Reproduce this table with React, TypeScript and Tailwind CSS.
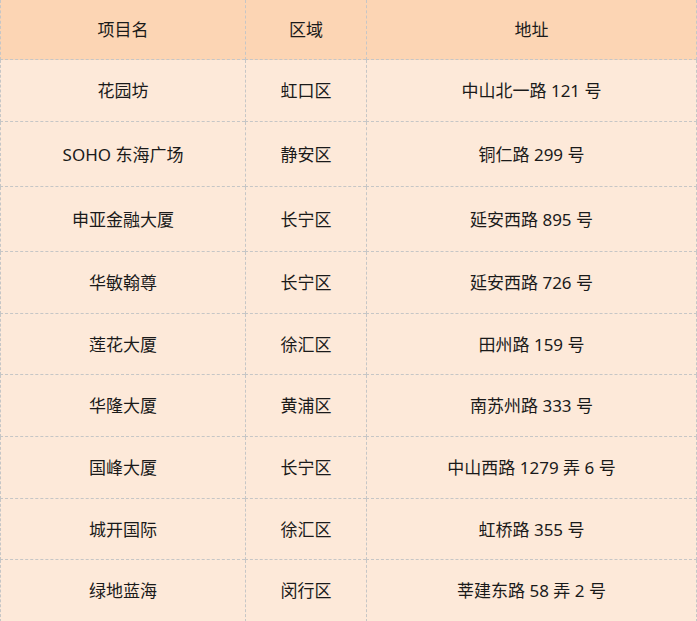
import React from "react";

const rows: { name: string; area: string; addr: string; h: string }[] = [
  { name: "花园坊", area: "虹口区", addr: "中山北一路 121 号", h: "h-[62px]" },
  { name: "SOHO 东海广场", area: "静安区", addr: "铜仁路 299 号", h: "h-[65px]" },
  { name: "申亚金融大厦", area: "长宁区", addr: "延安西路 895 号", h: "h-[65px]" },
  { name: "华敏翰尊", area: "长宁区", addr: "延安西路 726 号", h: "h-[62px]" },
  { name: "莲花大厦", area: "徐汇区", addr: "田州路 159 号", h: "h-[61px]" },
  { name: "华隆大厦", area: "黄浦区", addr: "南苏州路 333 号", h: "h-[62px]" },
  { name: "国峰大厦", area: "长宁区", addr: "中山西路 1279 弄 6 号", h: "h-[62px]" },
  { name: "城开国际", area: "徐汇区", addr: "虹桥路 355 号", h: "h-[61px]" },
  { name: "绿地蓝海", area: "闵行区", addr: "莘建东路 58 弄 2 号", h: "h-[62px]" },
];

const cell =
  "flex items-center justify-center border-l border-b border-dashed border-[#c6c6c6] pt-[1px]";

export default function App() {
  return (
    <div
      className="w-[697px] h-[621px] overflow-hidden bg-[#fde9d9] text-[17px] leading-[20px] text-[#1a1a1a]"
      style={{ fontFamily: '"Noto Sans", "Noto Sans CJK SC", sans-serif' }}
    >
      <div className="grid grid-cols-[245px_121px_331px] h-[60px] bg-[#fcd5b4]">
        <div className={cell}>项目名</div>
        <div className={cell}>区域</div>
        <div className={cell + " border-r"}>地址</div>
      </div>
      {rows.map((r, i) => (
        <div key={i} className={"grid grid-cols-[245px_121px_331px] " + r.h}>
          <div className={cell}>{r.name}</div>
          <div className={cell}>{r.area}</div>
          <div className={cell + " border-r"}>{r.addr}</div>
        </div>
      ))}
    </div>
  );
}
